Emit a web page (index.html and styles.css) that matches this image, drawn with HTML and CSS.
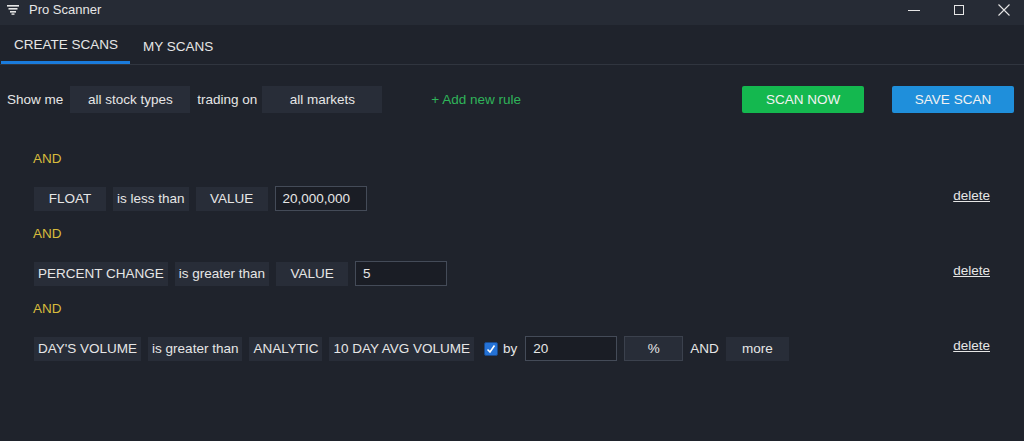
FILE: index.html
```html
<!DOCTYPE html>
<html lang="en">
<head>
    <meta charset="UTF-8">
    <title>Pro Scanner</title>
    <link rel="stylesheet" href="styles.css">
</head>
<body>

    <!-- Title Bar -->
    <div class="titlebar">
        <div class="title">
            <svg class="app-icon" width="12" height="10" viewBox="0 0 12 10">
                <rect x="0" y="0" width="12" height="1.6" fill="#e6e6e6"/>
                <rect x="1.5" y="3" width="9" height="1.6" fill="#e6e6e6"/>
                <rect x="3" y="6" width="6" height="1.6" fill="#e6e6e6"/>
                <rect x="4.5" y="8.4" width="3" height="1.4" fill="#e6e6e6"/>
            </svg>
            <span>Pro Scanner</span>
        </div>
        <div class="win-controls">
            <svg width="14" height="14" viewBox="0 0 14 14"><line x1="1" y1="7.5" x2="13" y2="7.5" stroke="#e6e6e6" stroke-width="1"/></svg>
            <svg width="14" height="14" viewBox="0 0 14 14"><rect x="2.5" y="2.5" width="9" height="9" fill="none" stroke="#e6e6e6" stroke-width="1"/></svg>
            <svg width="14" height="14" viewBox="0 0 14 14"><path d="M1.5 1.5 L12.5 12.5 M12.5 1.5 L1.5 12.5" stroke="#e6e6e6" stroke-width="1.1"/></svg>
        </div>
    </div>

    <!-- Tabs -->
    <div class="tabs">
        <div class="tab active">CREATE SCANS</div>
        <div class="tab">MY SCANS</div>
    </div>

    <!-- Scan toolbar -->
    <div class="toolbar">
        <span class="label">Show me</span>
        <span class="chip wide">all stock types</span>
        <span class="label">trading on</span>
        <span class="chip wide">all markets</span>
        <span class="add-rule">+ Add new rule</span>
        <button class="btn btn-scan">SCAN NOW</button>
        <button class="btn btn-save">SAVE SCAN</button>
    </div>

    <!-- Rules -->
    <div class="rules">
        <div class="rule-block">
            <div class="and">AND</div>
            <div class="rule">
                <div class="rule-parts">
                    <span class="chip">FLOAT</span>
                    <span class="chip">is less than</span>
                    <span class="chip">VALUE</span>
                    <span class="field">20,000,000</span>
                </div>
                <a class="delete" href="#">delete</a>
            </div>
        </div>

        <div class="rule-block">
            <div class="and">AND</div>
            <div class="rule">
                <div class="rule-parts">
                    <span class="chip">PERCENT CHANGE</span>
                    <span class="chip">is greater than</span>
                    <span class="chip">VALUE</span>
                    <span class="field">5</span>
                </div>
                <a class="delete" href="#">delete</a>
            </div>
        </div>

        <div class="rule-block">
            <div class="and">AND</div>
            <div class="rule">
                <div class="rule-parts">
                    <span class="chip">DAY'S VOLUME</span>
                    <span class="chip">is greater than</span>
                    <span class="chip">ANALYTIC</span>
                    <span class="chip">10 DAY AVG VOLUME</span>
                    <span class="check">
                        <svg width="12" height="12" viewBox="0 0 12 12"><path d="M2.5 6.5 L5 9 L9.5 2.5" fill="none" stroke="#ffffff" stroke-width="1.6"/></svg>
                    </span>
                    <span class="label by">by</span>
                    <span class="field">20</span>
                    <span class="chip unit">%</span>
                    <span class="label">AND</span>
                    <span class="chip more">more</span>
                </div>
                <a class="delete" href="#">delete</a>
            </div>
        </div>
    </div>

</body>
</html>
```

FILE: styles.css
```css
/* Global */
body {
    margin: 0;
    padding: 0;
    background: #1f232c;
    color: #e6e6e6;
    font-family: 'Liberation Sans', Arial, sans-serif;
    font-size: 13.5px;
    height: 100vh;
    overflow: hidden;
}

/* Title bar */
.titlebar {
    height: 25px;
    background: #262b35;
    display: flex;
    justify-content: space-between;
    align-items: center;
    font-size: 13px;
}

.title {
    display: flex;
    align-items: center;
    padding-left: 7px;
    margin-top: -7px;
}

.title span {
    margin-left: 10px;
}

.app-icon {
    margin-top: 2px;
}

.win-controls {
    display: flex;
    align-items: center;
    margin-top: -6px;
    padding-right: 13px;
    gap: 31px;
}

/* Tabs */
.tabs {
    display: flex;
    height: 39px;
    padding-left: 1px;
    border-bottom: 1px solid #30353f;
}

.tab {
    padding: 0 13px 0 13px;
    display: flex;
    align-items: center;
    padding-top: 3px;
    box-sizing: border-box;
}

.tab.active {
    padding-right: 12px;
    border-bottom: 3px solid #1a7bdc;
}

/* Toolbar */
.toolbar {
    display: flex;
    align-items: center;
    gap: 7px;
    margin-top: 21px;
    padding: 0 10px 0 7px;
    height: 27px;
}

.chip {
    background: #282d38;
    height: 24px;
    min-width: 64px;
    padding: 0 4px;
    display: inline-flex;
    align-items: center;
    justify-content: center;
    white-space: nowrap;
}

.chip.wide {
    width: 120px;
    height: 27px;
    padding: 0;
    box-sizing: border-box;
}

.toolbar .chip.wide + .label {
    margin-right: -2px;
}

.add-rule {
    color: #2fb45a;
    margin-left: 42px;
}

.btn {
    width: 122px;
    height: 27px;
    border: none;
    border-radius: 2px;
    color: #f2f2f2;
    font-family: inherit;
    font-size: 13.5px;
    cursor: pointer;
}

.btn-scan {
    background: #14b84f;
    margin-left: auto;
}

.btn-save {
    background: #1f8fdb;
    margin-left: 21px;
}

/* Rules */
.rules {
    padding: 38px 35px 0 33px;
}

.rule-block {
    margin-bottom: 15px;
}

.and {
    color: #d7bb3c;
    height: 16px;
    line-height: 16px;
    margin-bottom: 19px;
}

.rule {
    display: flex;
    justify-content: space-between;
    align-items: center;
    height: 25px;
    padding-left: 1px;
}

.rule-parts {
    display: flex;
    align-items: center;
    gap: 7px;
}

.field {
    width: 92px;
    height: 25px;
    box-sizing: border-box;
    border: 1px solid #444b58;
    background: #1a1d25;
    padding: 0 7px;
    display: inline-flex;
    align-items: center;
}

.chip.unit {
    width: 59px;
    height: 25px;
    box-sizing: border-box;
    border: 1px solid #3b414d;
    padding: 0;
    min-width: 0;
}

.chip.more {
    min-width: 55px;
}

.check {
    width: 14px;
    height: 14px;
    box-sizing: border-box;
    background: #2472d6;
    border: 1px solid #1a4a8c;
    border-radius: 2px;
    display: inline-flex;
    align-items: center;
    justify-content: center;
    margin-left: 3px;
}

.by {
    margin-left: -2px;
    margin-right: 1px;
}

.delete {
    color: #e6e6e6;
    text-decoration: underline;
    margin-top: -6px;
    margin-right: -1px;
}
```
